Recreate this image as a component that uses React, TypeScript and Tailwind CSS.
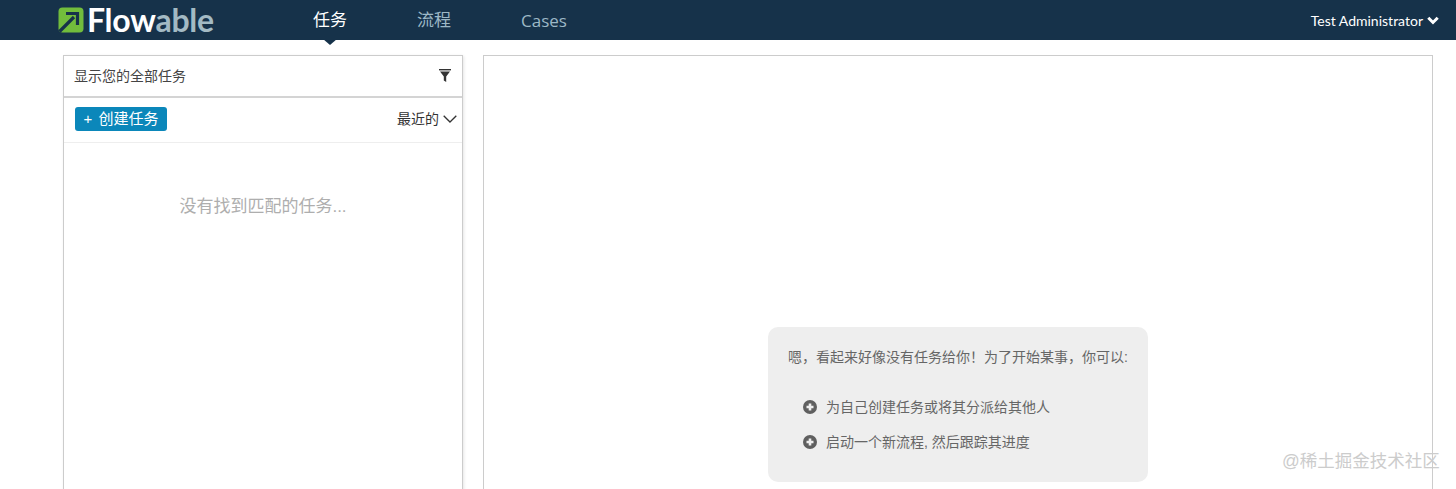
import React from "react";

const sans = `"Liberation Sans", "Noto Sans CJK SC", sans-serif`;

function PlusCircle() {
  return (
    <svg width="14" height="14" viewBox="0 0 14 14" className="shrink-0">
      <circle cx="7" cy="7" r="7" fill="#5f5f5f" />
      <path d="M7 3.5v7M3.5 7h7" stroke="#eeeeee" strokeWidth="2.6" />
    </svg>
  );
}

export default function App() {
  return (
    <div className="relative h-[489px] w-[1456px] overflow-hidden bg-white" style={{ fontFamily: sans }}>
      <header className="flex h-10 items-center bg-[#16324a] pl-[58px] pr-[17px]">
        <div className="flex w-[255px] items-center">
          <svg width="26" height="26" viewBox="0 0 26 26" className="shrink-0">
            <rect x="0.5" y="0.5" width="25" height="25" rx="4" fill="#72bd3c" />
            <path d="M1.5 24.5 L16 10" stroke="#16324a" strokeWidth="3.2" fill="none" />
            <path d="M8 6.5 H19.5 V18" stroke="#16324a" strokeWidth="3.2" fill="none" />
          </svg>
          <span className="ml-[3px] text-[32px] leading-none font-bold tracking-[-0.25px] text-white" style={{ fontFamily: "Lato, sans-serif" }}>
            Flow<span className="text-[#a3bac4]">able</span>
          </span>
        </div>
        <nav className="flex items-center pt-[2px] text-[17px]">
          <a className="relative flex h-10 w-[34px] items-center justify-center whitespace-nowrap text-white">
            任务
            <span className="absolute top-[38px] left-1/2 h-0 w-0 -translate-x-1/2 border-x-[7px] border-t-[6px] border-x-transparent border-t-[#16324a]" />
          </a>
          <a className="ml-[70px] whitespace-nowrap text-[#9db8c6]">流程</a>
          <a className="ml-[70px] whitespace-nowrap text-[17px] text-[#9db8c6]" style={{ fontFamily: "'Open Sans', sans-serif" }}>Cases</a>
        </nav>
        <div className="ml-auto flex items-center gap-[4px] text-[14px] text-white" style={{ fontFamily: "Lato, sans-serif" }}>
          Test Administrator
          <svg width="12" height="9" viewBox="0 0 12 9">
            <path d="M1.3 1.8 L6 6.5 L10.7 1.8" stroke="#fff" strokeWidth="3" fill="none" />
          </svg>
        </div>
      </header>

      <main className="flex h-[449px] gap-5 overflow-hidden pt-[15px] pr-[23px] pl-[63px]">
        <section className="h-[460px] w-[400px] shrink-0 border border-[#cccccc] shadow-[1px_1px_3px_rgba(0,0,0,0.1)]">
          <div className="flex h-[42px] items-center justify-between border-b-2 border-[#d4d4d4] pr-[11px] pl-[10px] text-[14px] text-[#444444]">
            <span>显示您的全部任务</span>
            <svg width="12" height="13" viewBox="0 0 12 13" className="-mt-[2px]">
              <path d="M0 0h12v1.4H0z" fill="#333" />
              <path d="M1 2.6h10L7.2 7.6V13L4.8 11.4V7.6z" fill="#333" />
            </svg>
          </div>
          <div className="flex h-[45px] items-center justify-between border-b border-[#eeeeee] pr-[5px] pb-[2px] pl-[11px]">
            <button className="flex h-6 w-[92px] items-center justify-center gap-[6px] rounded-[3px] bg-[#0b87ba] pt-[1px] text-[15px] text-white">
              <span>+</span>
              <span>创建任务</span>
            </button>
            <div className="flex items-center gap-[4px] text-[14px] text-[#333333]">
              最近的
              <svg width="14" height="8" viewBox="0 0 14 8">
                <path d="M0.7 0.7 L7 7 L13.3 0.7" stroke="#333" strokeWidth="1.3" fill="none" />
              </svg>
            </div>
          </div>
          <p className="pt-[52px] text-center text-[17px] leading-6 text-[#aeaeae]">没有找到匹配的任务...</p>
        </section>

        <section className="h-[460px] flex-1 border border-[#cccccc] pt-[271px] pl-[284px]">
          <div className="h-[155px] w-[380px] rounded-[10px] bg-[#eeeeee] pt-[21px] pl-5 text-[14px] text-[#666666]">
            <p className="leading-[18px] whitespace-nowrap">嗯，看起来好像没有任务给你！为了开始某事，你可以:</p>
            <ul className="mt-[32px] flex flex-col gap-[17px] pl-[15px]">
              <li className="flex h-[18px] items-center gap-[9px]">
                <PlusCircle />
                为自己创建任务或将其分派给其他人
              </li>
              <li className="flex h-[18px] items-center gap-[9px]">
                <PlusCircle />
                启动一个新流程, 然后跟踪其进度
              </li>
            </ul>
          </div>
        </section>
      </main>

      <span className="absolute top-[451px] left-[1282px] text-[17.5px] leading-5 text-[#cccccc]">@稀土掘金技术社区</span>
    </div>
  );
}
